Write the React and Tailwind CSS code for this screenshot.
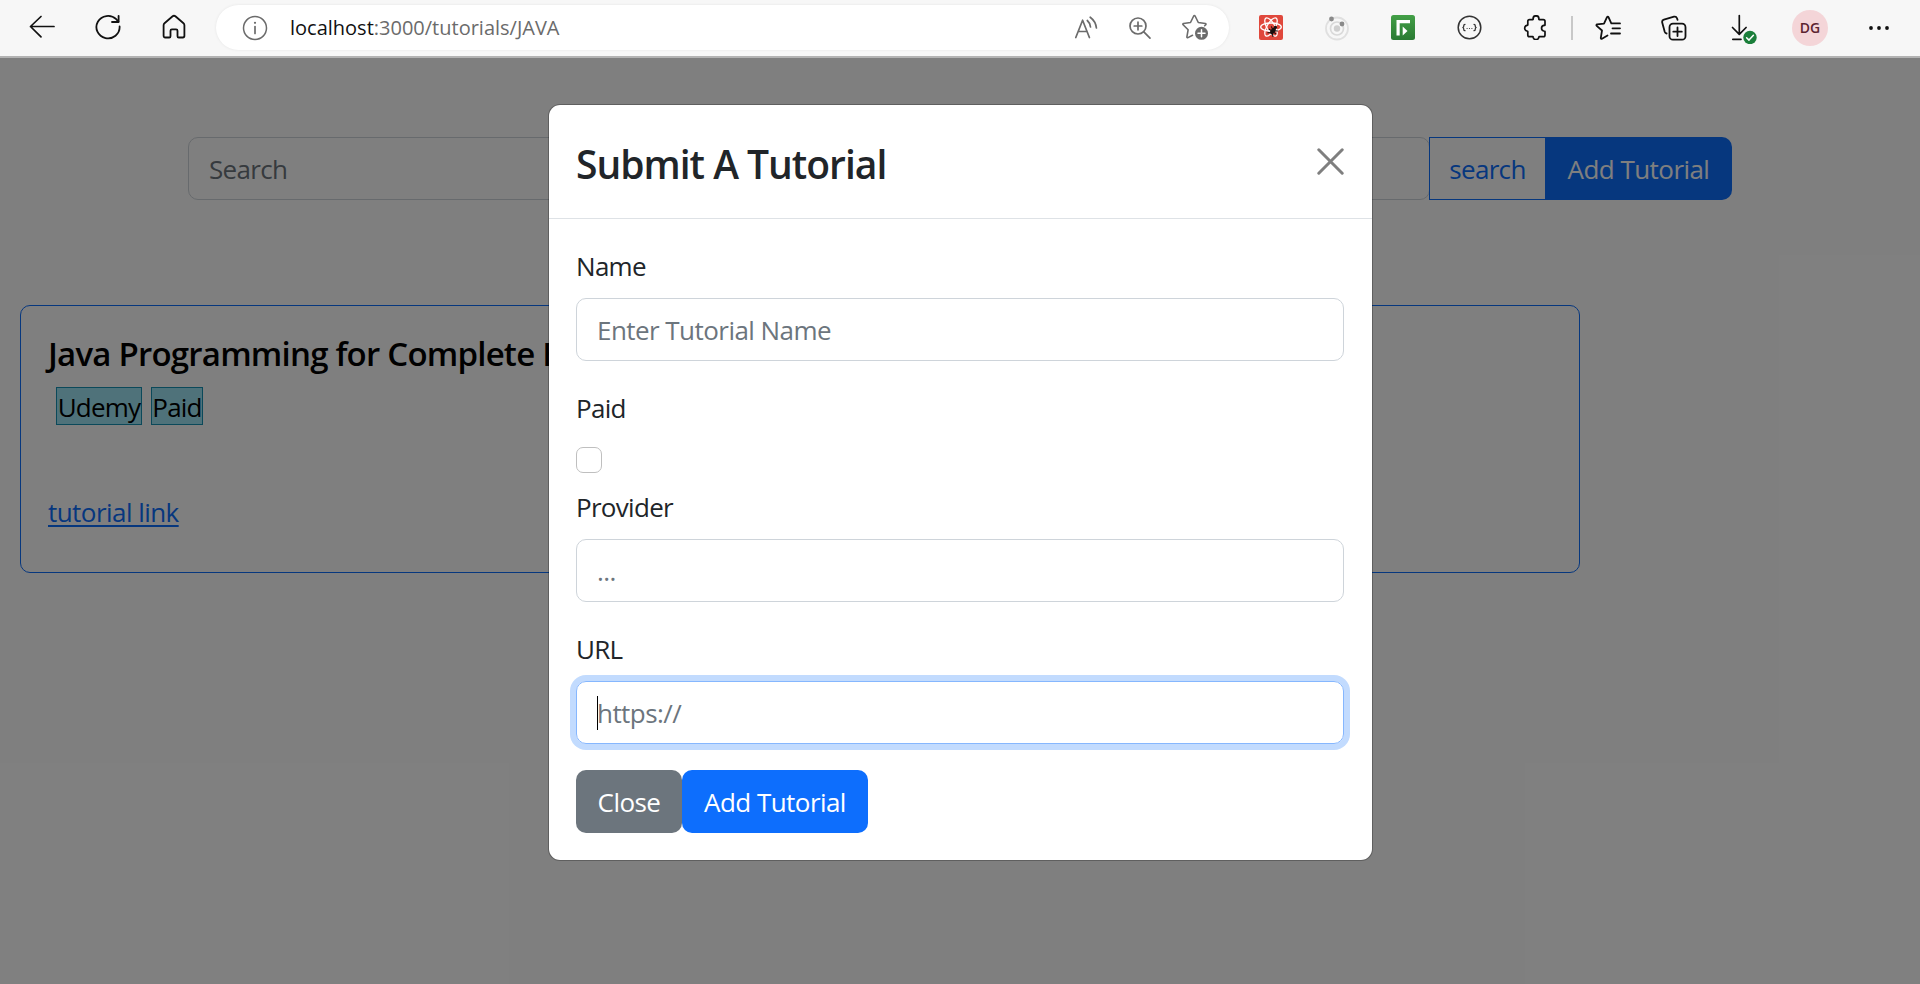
import React from 'react';

const line = { fill: 'none', stroke: 'currentColor', strokeLinecap: 'round', strokeLinejoin: 'round' };

const Cell = ({ children }) => (
  <div className="flex w-[66px] shrink-0 items-center justify-center">{children}</div>
);

const BackIcon = () => (
  <svg width="26" height="26" viewBox="0 0 26 26" {...line} strokeWidth="1.7">
    <path d="M25 12.5H1.5M12 2.5 1.5 12.5 12 22.8" />
  </svg>
);

const ReloadIcon = () => (
  <svg width="26" height="26" viewBox="0 0 26 26" {...line} strokeWidth="1.8">
    <path d="M24.6 12.5A11.6 11.2 0 1 1 21.2 5.2L23.4 7.6" />
    <path d="M23.6 1.8V8H17" />
  </svg>
);

const HomeIcon = () => (
  <svg width="24" height="26" viewBox="0 0 24 26" {...line} strokeWidth="1.8">
    <path d="M1.6 11.2c0-.8.3-1.5.9-2L10.6 2.3c.8-.7 2-.7 2.8 0l8.1 6.900c.6.5.9 1.200.9 2V21.800c0 1-.7 1.700-1.600 1.700h-4c-.8 0-1.300-.6-1.300-1.300v-5.400c0-.8-.6-1.400-1.400-1.400h-4.200c-.8 0-1.400.6-1.400 1.400v5.400c0 .7-.5 1.300-1.300 1.300h-4c-.9 0-1.600-.7-1.600-1.700Z" />
  </svg>
);

const InfoIcon = () => (
  <svg width="26" height="26" viewBox="0 0 26 26" {...line} strokeWidth="1.5">
    <circle cx="13" cy="13" r="11.5" />
    <path d="M13 11.5v7" strokeWidth="1.7" />
    <circle cx="13" cy="7.8" r="1.1" fill="currentColor" stroke="none" />
  </svg>
);

const ReadAloudIcon = () => (
  <svg width="24" height="24" viewBox="0 0 24 24" {...line} strokeWidth="1.7">
    <path d="M1.8 21.5 8.6 4.2l6.8 17.3M4.2 15.5h8.8" />
    <path d="M13.3 4.5c1.900 1.700 3 4 3.200 6.500M16.200 1.200c3.600 2.700 5.800 6.600 6.200 10.800" />
  </svg>
);

const ZoomIcon = () => (
  <svg width="24" height="24" viewBox="0 0 24 24" {...line} strokeWidth="1.7">
    <circle cx="10" cy="10" r="8" />
    <path d="M15.8 15.8 22 22.2M10 6.2v7.600M6.200 10h7.600" />
  </svg>
);

const StarAddIcon = () => (
  <svg width="27" height="27" viewBox="0 0 27 27" {...line} strokeWidth="1.6">
    <path d="M10.5 21.3 6 23.6c-.6.3-1.200-.1-1.100-.8l1.200-7-5-5c-.5-.5-.2-1.200.4-1.300l7-1L11.700 2c.3-.6 1.100-.6 1.400 0l3.200 6.500 7 1c.7.100.9.900.4 1.300l-1 1" />
    <circle cx="19.5" cy="19.3" r="6.5" fill="currentColor" stroke="none" />
    <path d="M19.5 15.8v7M16 19.3h7" stroke="#fff" strokeWidth="1.5" />
  </svg>
);

const ReactBugIcon = () => (
  <svg width="24" height="25" viewBox="0 0 24 25" fill="none">
    <rect width="24" height="25" rx="2" fill="#e0483c" />
    <g stroke="#fff" strokeWidth="1.3">
      <ellipse cx="12" cy="12" rx="10.3" ry="4" />
      <ellipse cx="12" cy="12" rx="10.3" ry="4" transform="rotate(60 12 12)" />
      <ellipse cx="12" cy="12" rx="10.3" ry="4" transform="rotate(120 12 12)" />
    </g>
    <g transform="rotate(35 14 15)">
      <ellipse cx="14.5" cy="16" rx="2.2" ry="3.6" fill="#1a0f0e" />
      <circle cx="14.5" cy="11.6" r="1.7" fill="#1a0f0e" />
      <path d="M10.500 13l3 1.800M18.500 13l-3 1.800M10 16.500h9M11 20.500l2.500-2M18 20.500l-2.500-2" stroke="#1a0f0e" strokeWidth="1.100" />
    </g>
  </svg>
);

const OrbitIcon = () => (
  <svg width="26" height="26" viewBox="0 0 26 26" fill="none">
    <circle cx="13" cy="13.5" r="11" stroke="#e0e0e0" strokeWidth="1.8" />
    <circle cx="13" cy="13.5" r="6.5" stroke="#d9d9d9" strokeWidth="1.7" />
    <circle cx="13" cy="13.5" r="3.2" fill="#cfcfcf" />
    <circle cx="7.5" cy="4" r="2.4" fill="#8a8a8a" />
    <circle cx="18" cy="9" r="2.4" fill="#8a8a8a" />
  </svg>
);

const GreenPlayIcon = () => (
  <svg width="24" height="25" viewBox="0 0 24 25">
    <defs>
      <linearGradient id="leaf" x1="0" y1="0" x2="0" y2="1">
        <stop offset="0" stopColor="#43a047" />
        <stop offset="1" stopColor="#2a7a33" />
      </linearGradient>
    </defs>
    <rect width="24" height="25" rx="2.5" fill="url(#leaf)" />
    <path d="M5.5 5h13.5v3.2H8.7V20.500H5.500Z" fill="#fff" />
    <path d="M11.700 11.500 16.500 16l-4.800 4.500Z" fill="#fff" />
  </svg>
);

const BracesIcon = () => (
  <svg width="25" height="25" viewBox="0 0 25 25" {...line} strokeWidth="1.5" className="text-[#333]">
    <circle cx="12.5" cy="12.5" r="11.3" />
    <path d="M8 9.300c-1 0-1.200.5-1.200 1.200 0 1.100 0 1.600-.9 2 .9.400.9.900.9 2 0 .7.2 1.200 1.200 1.200M17 9.300c1 0 1.200.5 1.200 1.200 0 1.100 0 1.600.9 2-.9.400-.9.900-.9 2 0 .7-.2 1.200-1.200 1.200" strokeWidth="1.3" />
    <g fill="currentColor" stroke="none">
      <circle cx="10.1" cy="13.5" r=".6" />
      <circle cx="12.5" cy="13.5" r=".6" />
      <circle cx="14.9" cy="13.5" r=".6" />
    </g>
  </svg>
);

const PuzzleIcon = () => (
  <svg width="25" height="25" viewBox="0 0 25 25" {...line} strokeWidth="1.7">
    <path d="M6.500 4.600H9.700c.5 0 .4-.4.4-.9a2.900 2.900 0 0 1 5.800 0c0 .5-.1.900.4.900H20.300c1 0 1.700.7 1.700 1.700v3.700c0 .5-.5.400-1.300.4a2.900 2.900 0 0 0 0 5.600c.8 0 1.300 0 1.300.5v3.400c0 1-.7 1.700-1.700 1.700h-4c-.5 0-.3.4-.5.900a2.900 2.900 0 0 1-5.600 0c-.1-.5 0-.9-.5-.9H6.500c-1 0-1.700-.7-1.700-1.700v-3.400c0-.5-.4-.4-1-.5a2.900 2.900 0 0 1 0-5.600c.6-.1 1 0 1-.4V6.300c0-1 .7-1.700 1.700-1.700Z" />
  </svg>
);

const StarListIcon = () => (
  <svg width="26" height="26" viewBox="0 0 26 26" {...line} strokeWidth="1.8">
    <path d="M12.5 20.4 7 23.7c-.7.400-1.400-.1-1.200-.9L7 15.500l-5.300-4.700c-.6-.5-.3-1.300.4-1.400l6.900-.7L12 2.200c.3-.7 1.200-.7 1.500 0l2.800 6.200h8.700M17.500 13.300H25M16 18.500h9" />
  </svg>
);

const CollectionsIcon = () => (
  <svg width="26" height="26" viewBox="0 0 26 26" {...line} strokeWidth="1.8">
    <path d="M5.6 18.5c-1-.2-1.600-.8-1.900-1.800L1.200 7.600C.9 6.300 1.600 5.100 2.900 4.700L13 1.700c1.300-.4 2.500.3 3 1.600l.5 1.500" />
    <rect x="8.5" y="8.700" width="16" height="16" rx="3.5" />
    <path d="M16.5 12.500v8.500M12.300 16.700h8.500" />
  </svg>
);

const DownloadIcon = () => (
  <svg width="26" height="30" viewBox="0 0 26 30" {...line} strokeWidth="1.7">
    <path d="M8.3 1.5V20M1.5 13.5 8.3 20.3l6.8-6.8M1.8 25.3H10" />
    <circle cx="19" cy="23.5" r="6.7" fill="#1b7f3b" stroke="none" />
    <path d="m15.6 23.7 2.4 2.4 4.4-4.8" stroke="#fff" strokeWidth="1.5" />
  </svg>
);

const MoreIcon = () => (
  <svg width="22" height="6" viewBox="0 0 22 6" fill="currentColor">
    <circle cx="3" cy="3" r="1.9" />
    <circle cx="11" cy="3" r="1.9" />
    <circle cx="19" cy="3" r="1.9" />
  </svg>
);

const BrowserBar = () => (
  <header className="relative z-20 flex h-[58px] shrink-0 items-start border-b-2 border-[#b3b3b3] bg-[#f7f7f7] text-[#111]">
    <div className="flex h-[54px] w-[216px] items-center pl-[9px]">
      <Cell><BackIcon /></Cell>
      <Cell><ReloadIcon /></Cell>
      <Cell><HomeIcon /></Cell>
    </div>
    <div className="mt-[5px] flex h-[45px] w-[1013px] items-center rounded-full bg-white pl-[26px] pr-[20px] text-[#6b6b6b] shadow-[0_0_3px_rgba(0,0,0,0.08)]">
      <InfoIcon />
      <div className="ml-[22px] flex-1 text-[20px] leading-none">
        <span className="text-[#111]">localhost</span>:3000/tutorials/JAVA
      </div>
      <div className="flex items-center gap-[30px]">
        <ReadAloudIcon />
        <ZoomIcon />
        <StarAddIcon />
      </div>
    </div>
    <div className="ml-[9px] flex h-[55px] items-center">
      <Cell><ReactBugIcon /></Cell>
      <Cell><OrbitIcon /></Cell>
      <Cell><GreenPlayIcon /></Cell>
      <Cell><BracesIcon /></Cell>
      <Cell><PuzzleIcon /></Cell>
      <div className="ml-[3px] h-6 w-[2px] bg-[#c8c8c8]" />
      <div className="ml-[2px] flex items-center">
        <Cell><StarListIcon /></Cell>
        <Cell><CollectionsIcon /></Cell>
        <div className="ml-[4px] flex w-[66px] justify-center pt-[2px]"><DownloadIcon /></div>
        <div className="flex h-9 w-[66px] items-center justify-center">
          <div className="flex size-9 items-center justify-center rounded-full bg-[#f4d5d8] text-[14px] font-semibold text-[#5c2430]">DG</div>
        </div>
        <div className="ml-[3px] flex w-[66px] justify-center"><MoreIcon /></div>
      </div>
    </div>
  </header>
);

const Field = ({ label, placeholder, focused, className }) => (
  <div className={className}>
    <div className="leading-[40px] tracking-[-0.7px]">{label}</div>
    <div
      className={
        focused
          ? 'mt-[12px] flex h-[63px] items-center rounded-[10px] border border-[#86b7fe] px-[20px] pt-[2px] text-[#6c757d] shadow-[0_0_0_6px_#c2dbfe]'
          : 'mt-[12px] flex h-[63px] items-center rounded-[10px] border border-[#ced4da] px-[20px] pt-[2px] text-[#6c757d]'
      }
    >
      {focused && <span className="-mr-px mb-[2px] h-[34px] w-px bg-black" />}
      {placeholder}
    </div>
  </div>
);

const Modal = () => (
  <div className="absolute left-[548px] top-[104px] flex h-[757px] w-[825px] flex-col rounded-[12px] border border-black/25 bg-white bg-clip-padding">
    <div className="flex h-[114px] shrink-0 items-center justify-between border-b border-[#dee2e6] pl-[27px] pr-[28px]">
      <h1 className="pt-[3px] text-[39px] font-semibold leading-none tracking-[-1px]">Submit A Tutorial</h1>
      <svg width="27" height="27" viewBox="0 0 27 27" fill="none" stroke="#7f7f7f" strokeWidth="3" strokeLinecap="round">
        <path d="M1.8 1.8 25.2 25.2M25.2 1.8 1.8 25.2" />
      </svg>
    </div>
    <div className="flex flex-col pl-[27px] pr-[28px] pt-[27px]">
      <Field label="Name" placeholder="Enter Tutorial Name" />
      <div className="mt-[27px] leading-[40px] tracking-[-0.7px]">Paid</div>
      <div className="mt-[19px] size-[26px] rounded-[7px] border border-[#bfbfbf]" />
      <Field label="Provider" placeholder="..." className="mt-[14px]" />
      <Field label="URL" placeholder="https://" focused className="mt-[27px]" />
      <div className="mt-[26px] flex text-white">
        <div className="flex h-[63px] w-[106px] items-center justify-center rounded-[10px] bg-[#6c757d] pt-[2px]">Close</div>
        <div className="flex h-[63px] w-[186px] items-center justify-center rounded-[10px] bg-[#0d6efd] pt-[2px]">Add Tutorial</div>
      </div>
    </div>
  </div>
);

export default function App() {
  return (
    <div className="relative flex h-[984px] w-[1920px] flex-col overflow-hidden bg-white font-['Open_Sans','Noto_Sans',sans-serif] text-[#212529]">
      <BrowserBar />
      <main className="flex flex-1 flex-col text-[26px] tracking-[-0.55px]">
        <div className="ml-[188px] mt-[79px] flex h-[63px] w-[1544px]">
          <div className="flex flex-1 items-center rounded-[10px] border border-[#ced4da] pl-[20px] pt-[2px] tracking-[-0.7px] text-[#6c757d]">Search</div>
          <div className="-ml-px flex w-[117px] items-center justify-center border border-[#0d6efd] pt-[2px] tracking-[-0.7px] text-[#0d6efd]">search</div>
          <div className="-ml-px flex w-[187px] items-center justify-center rounded-r-[10px] bg-[#0d6efd] pt-[2px] text-white">Add Tutorial</div>
        </div>
        <div className="ml-[20px] mt-[105px] h-[268px] w-[1560px] rounded-[10px] border border-[#0d6efd] px-[27px] text-black">
          <h2 className="mt-[28px] text-[33px] font-semibold leading-[40px] tracking-[-0.78px]">Java Programming for Complete B</h2>
          <div className="ml-[8px] mt-[13px] flex gap-[9px]">
            <div className="flex h-[38px] w-[86px] items-center justify-center border border-[#1693b5] bg-[#9ee4f5] pt-[2px] tracking-[-0.8px]">Udemy</div>
            <div className="flex h-[38px] w-[52px] items-center justify-center border border-[#1693b5] bg-[#9ee4f5] pt-[2px] tracking-[-0.8px]">Paid</div>
          </div>
          <div className="mt-[67px] leading-[40px] text-[#0d6efd] underline decoration-2 underline-offset-[3px]">tutorial link</div>
        </div>
      </main>
      <div className="absolute inset-x-0 bottom-0 top-[58px] z-10 bg-black/50" />
      <div className="absolute inset-0 z-30 text-[26px] tracking-[-0.55px]">
        <Modal />
      </div>
    </div>
  );
}
